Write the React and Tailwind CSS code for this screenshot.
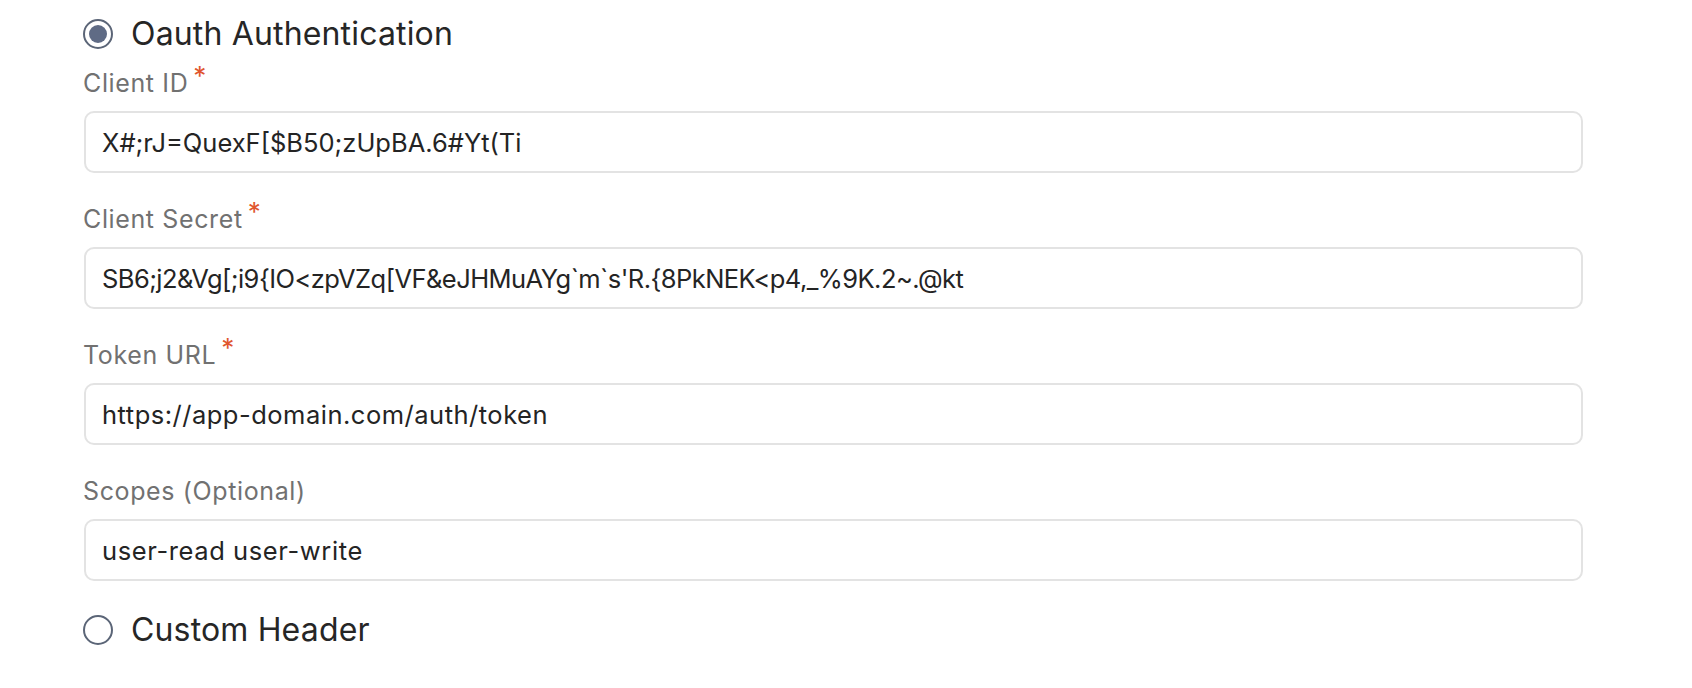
import { useState } from "react";

const fields = [
  { label: "Client ID", required: true, value: "X#;rJ=QuexF[$B50;zUpBA.6#Yt(Ti", tracking: "tracking-normal" },
  {
    label: "Client Secret",
    required: true,
    value: "SB6;j2&Vg[;i9{IO<zpVZq[VF&eJHMuAYg`m`s'R.{8PkNEK<p4,_%9K.2~.@kt",
    tracking: "tracking-[-0.55px]",
  },
  { label: "Token URL", required: true, value: "https://app-domain.com/auth/token", tracking: "tracking-[0.5px]" },
  { label: "Scopes (Optional)", required: false, value: "user-read user-write", tracking: "tracking-[0.6px]" },
];

function Radio({ checked, label, onClick }) {
  return (
    <button onClick={onClick} className="flex items-center gap-[18px] h-[40px] text-left">
      <span className="w-[30px] h-[30px] rounded-full border-2 border-[#5b6577] flex items-center justify-center shrink-0">
        {checked && <span className="w-[18px] h-[18px] rounded-full bg-[#5f6b85]" />}
      </span>
      <span className="text-[32px] leading-[40px] tracking-[0.005em] text-[#262626]">{label}</span>
    </button>
  );
}

export default function App() {
  const [mode, setMode] = useState("oauth");
  const [values, setValues] = useState(fields.map((f) => f.value));

  return (
    <div
      className="bg-white w-[1692px] h-[688px] pl-[83px] pr-[109px] pt-[14px]"
      style={{ fontFamily: "Inter, 'Noto Sans', sans-serif" }}
    >
      <Radio checked={mode === "oauth"} label="Oauth Authentication" onClick={() => setMode("oauth")} />

      <div className="mt-[13px] flex flex-col gap-[30px]">
        {fields.map((f, i) => (
          <div key={f.label}>
            <label className="flex items-start text-[25px] leading-[32px] tracking-[0.025em] text-[#717171]">
              {f.label}
              {f.required && (
                <span className="ml-[5px] text-[26px] leading-[18px] text-[#e0562f]">*</span>
              )}
            </label>
            <input
              type="text"
              value={values[i]}
              onChange={(e) => {
                const next = [...values];
                next[i] = e.target.value;
                setValues(next);
              }}
              className={`mt-[12px] ml-[1px] w-[1499px] h-[62px] px-[16px] border-2 border-[#e3e3e3] rounded-[10px] text-[25.5px] text-[#242424] outline-none ${f.tracking}`}
            />
          </div>
        ))}
      </div>

      <div className="mt-[29px]">
        <Radio checked={mode === "header"} label="Custom Header" onClick={() => setMode("header")} />
      </div>
    </div>
  );
}
